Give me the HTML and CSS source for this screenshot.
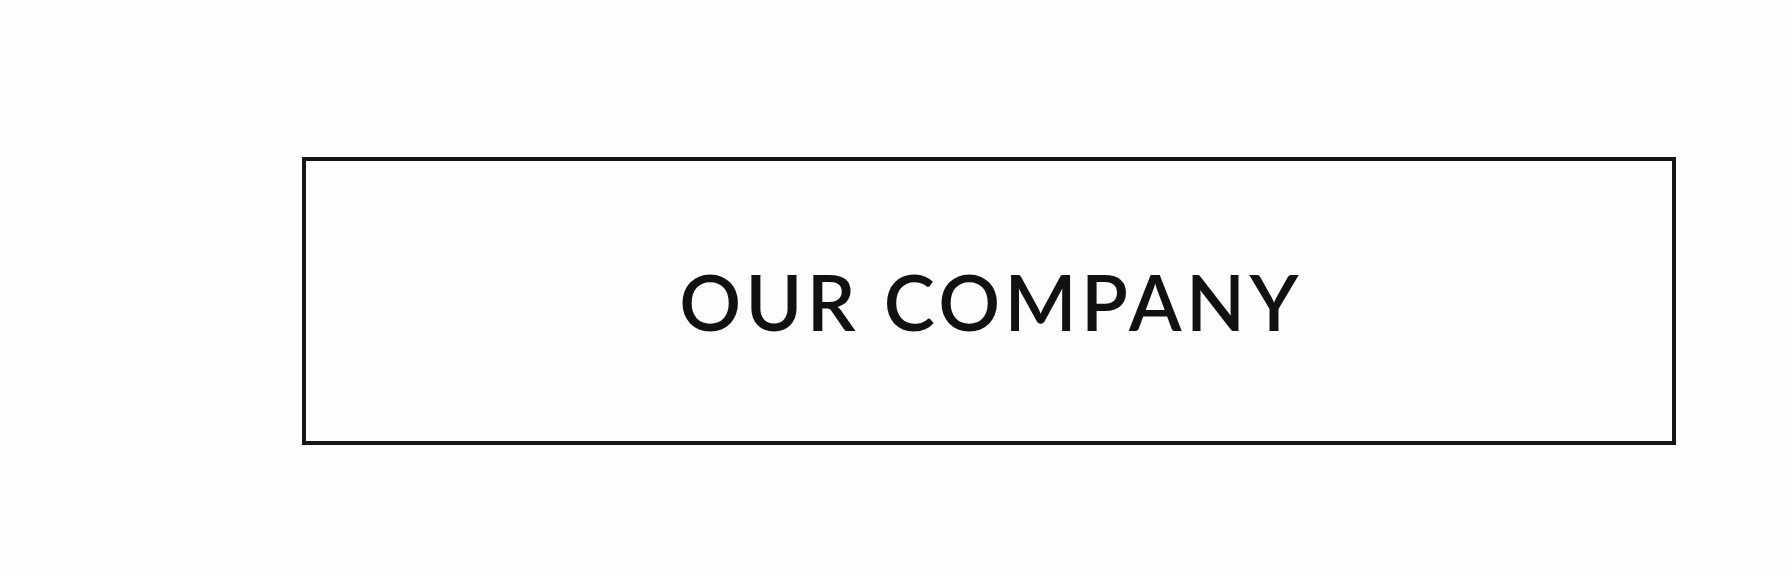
FILE: index.html
```html
<!DOCTYPE html>
<html>
<head>
<meta charset="utf-8">
<link rel="stylesheet" href="styles.css">
</head>
<body>
<main class="page">
  <div class="box">
    <h1 class="title">OUR COMPANY</h1>
  </div>
</main>
</body>
</html>
```
FILE: styles.css
```css
html, body {
  margin: 0;
  padding: 0;
  background: #fdfdfd;
}
.page {
  width: 1792px;
  height: 576px;
  box-sizing: border-box;
  padding: 157px 0 0 302px;
}
.box {
  box-sizing: border-box;
  width: 1374px;
  height: 288px;
  border: 4px solid #161616;
  display: flex;
  align-items: center;
  justify-content: center;
}
.title {
  margin: 0 -4px 0 0;
  font-family: Lato, "Open Sans", sans-serif;
  font-weight: 600;
  font-size: 77px;
  letter-spacing: 4.4px;
  color: #111;
  line-height: 1;
}
```
